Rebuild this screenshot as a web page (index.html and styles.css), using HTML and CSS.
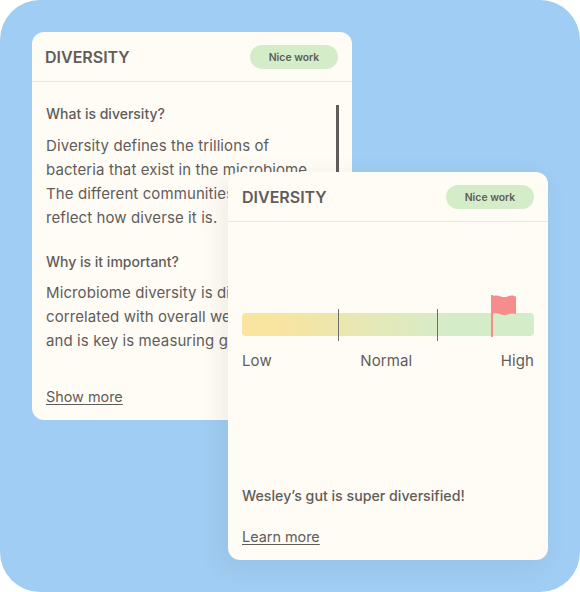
FILE: index.html
```html
<!DOCTYPE html>
<html lang="en">
<head>
<meta charset="utf-8">
<title>Diversity</title>
<link rel="stylesheet" href="styles.css">
</head>
<body>
<main class="stage">
  <section class="card card-info">
    <header class="card-head">
      <h2 class="title">DIVERSITY</h2>
      <span class="pill">Nice work</span>
    </header>
    <div class="info-body">
      <div class="info-text">
        <h3 class="q">What is diversity?</h3>
        <p class="para">Diversity defines the trillions of<br>bacteria that exist in the microbiome.<br>The different communities<br>reflect how diverse it is.</p>
        <h3 class="q q-second">Why is it important?</h3>
        <p class="para">Microbiome diversity is directly<br>correlated with overall wellness<br>and is key is measuring gut health</p>
      </div>
      <div class="scrollbar"></div>
    </div>
    <a class="more more-info" href="#">Show more</a>
  </section>
  <section class="card card-score">
    <header class="card-head">
      <h2 class="title">DIVERSITY</h2>
      <span class="pill">Nice work</span>
    </header>
    <div class="score-body">
      <div class="gauge">
        <div class="bar"></div>
        <i class="tick tick-a"></i>
        <i class="tick tick-b"></i>
        <svg class="flag" width="26" height="42" viewBox="0 0 26 42" aria-hidden="true">
          <rect x="0" y="0" width="2" height="42" fill="#f68d8d"/>
          <path d="M0 1.5C3 .5 6 .2 9 1.2S13 2.6 17 1.2 22 .5 25 1.5V19C22 18 20 18.400 17 19.500S12 20.300 9 19 4 18 0 19Z" fill="#f68d8d"/>
        </svg>
      </div>
      <div class="scale"><span>Low</span><span>Normal</span><span>High</span></div>
      <p class="verdict">Wesley’s gut is super diversified!</p>
      <a class="more" href="#">Learn more</a>
    </div>
  </section>
</main>
</body>
</html>
```
FILE: styles.css
```css
* { box-sizing: border-box; }
html, body { margin: 0; padding: 0; background: #fff; }
body { font-family: "Inter", "Open Sans", sans-serif; color: #5f5d5b; }
.stage {
  position: relative;
  width: 580px;
  height: 592px;
  background: #a0cdf3;
  border-radius: 40px;
  overflow: hidden;
}
.card {
  position: absolute;
  width: 320px;
  height: 388px;
  background: #fffcf5;
  border-radius: 12px;
  display: flex;
  flex-direction: column;
  overflow: hidden;
}
.card-info { left: 32px; top: 32px; }
.card-score { left: 228px; top: 172px; box-shadow: -6px 6px 24px rgba(90, 90, 90, .10); }
.card-head {
  height: 50px;
  flex: none;
  display: flex;
  align-items: center;
  justify-content: space-between;
  padding: 2px 14px 2px 13px;
  border-bottom: 1px solid #e8e6e2;
}
.card-score .card-head { padding-left: 14px; }
.title {
  margin: 0;
  font-size: 16px;
  font-weight: 600;
  letter-spacing: 0;
  color: #5f5d5b;
}
.pill {
  width: 88px;
  height: 24px;
  display: flex;
  align-items: center;
  justify-content: center;
  padding-top: 2px;
  border-radius: 12px;
  background: #d5ecc9;
  font-size: 10.400px;
  font-weight: 600;
  color: #5f5d5b;
}
.info-body {
  flex: 1;
  min-height: 0;
  display: flex;
  justify-content: space-between;
  padding: 22px 13.500px 0 14px;
  overflow: hidden;
}
.info-text { width: 284px; flex: none; }
.q {
  margin: 0;
  height: 20px;
  font-size: 14px;
  font-weight: 500;
  line-height: 20px;
  color: #5f5d5b;
  white-space: nowrap;
}
.q-second { margin-top: 22px; }
.para {
  margin: 10px 0 0;
  font-size: 15px;
  letter-spacing: .1px;
  line-height: 24px;
  color: #5f5d5b;
  white-space: nowrap;
}
.q-second + .para { margin-top: 9px; }
.scrollbar {
  width: 2.500px;
  height: 120px;
  margin-top: 1px;
  background: #5f5d5b;
  flex: none;
}
.more {
  font-size: 14.400px;
  line-height: 20px;
  color: #5f5d5b;
  text-underline-offset: 2px;
  text-decoration-thickness: 1px;
  align-self: flex-start;
}
.more-info { margin: 0 0 13px 14px; }
.score-body {
  flex: 1;
  display: flex;
  flex-direction: column;
  padding: 0 14px 13px;
}
.gauge { position: relative; margin-top: 91px; height: 24px; }
.bar {
  width: 100%;
  height: 23px;
  border-radius: 4px;
  background: linear-gradient(90deg, #f9e4a0 12%, #d5ecc9 72%);
}
.tick {
  position: absolute;
  top: -4px;
  width: 1px;
  height: 32px;
  background: #6f6d6a;
}
.tick-a { left: 96px; }
.tick-b { left: 195px; }
.flag { position: absolute; left: 249px; top: -18px; }
.scale {
  display: flex;
  justify-content: space-between;
  margin-top: 12px;
  font-size: 15px;
  letter-spacing: .1px;
  line-height: 24px;
}
.verdict {
  margin: auto 0 21px;
  font-size: 14.200px;
  font-weight: 500;
  line-height: 20px;
  color: #5f5d5b;
}
```
